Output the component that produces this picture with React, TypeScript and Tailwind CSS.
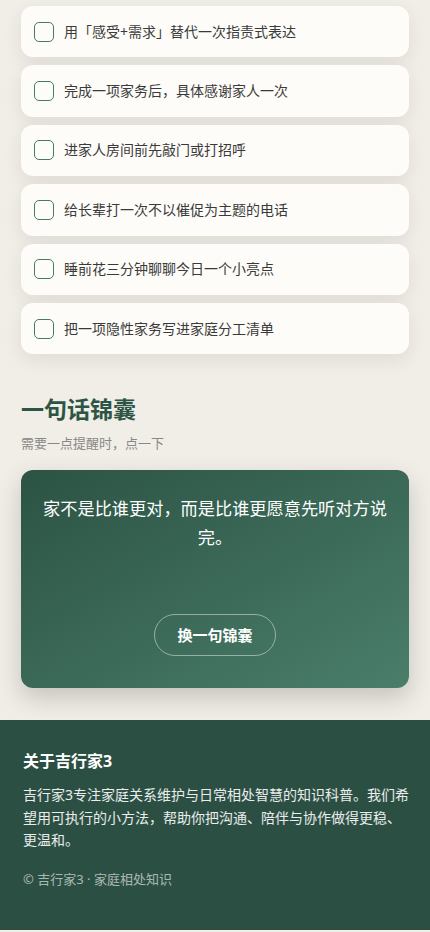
import { useState } from "react";

const TASKS = [
  "用「感受+需求」替代一次指责式表达",
  "完成一项家务后，具体感谢家人一次",
  "进家人房间前先敲门或打招呼",
  "给长辈打一次不以催促为主题的电话",
  "睡前花三分钟聊聊今日一个小亮点",
  "把一项隐性家务写进家庭分工清单",
];

const TIPS = [
  "家不是比谁更对，而是比谁更愿意先听对方说完。",
  "先说“我感到”，再说“我希望”，争吵会少一半。",
  "一句具体的谢谢，比十句笼统的夸奖更暖心。",
];

export default function App() {
  const [done, setDone] = useState<boolean[]>(TASKS.map(() => false));
  const [tip, setTip] = useState(0);

  return (
    <div
      className="min-h-screen bg-[#f1ede7] text-[#333]"
      style={{ fontFamily: '"Noto Sans", "Noto Sans CJK SC", sans-serif' }}
    >
      {/* Checklist */}
      <ul className="flex flex-col gap-2 px-[21px] pt-[6px]">
        {TASKS.map((task, i) => (
          <li key={task}>
            <button
              type="button"
              className="flex h-[51.4px] w-full items-center gap-[10px] rounded-xl bg-[#fdfcf8] px-[13px] text-left shadow-[0_6px_18px_rgba(60,60,40,0.09)]"
              onClick={() => setDone((d) => d.map((v, j) => (j === i ? !v : v)))}
            >
              <span
                className={`flex h-[20px] w-[20px] shrink-0 items-center justify-center rounded-[5px] border-[1.5px] border-[#457a66] ${
                  done[i] ? "bg-[#457a66]" : "bg-transparent"
                }`}
              >
                {done[i] ? (
                  <svg viewBox="0 0 24 24" className="h-3.5 w-3.5" fill="none" stroke="white" strokeWidth="3" strokeLinecap="round" strokeLinejoin="round">
                    <path d="M5 12l5 5L19 7" />
                  </svg>
                ) : null}
              </span>
              <span className="text-[14px] leading-[22px] text-[#3a3a3a]">{task}</span>
            </button>
          </li>
        ))}
      </ul>

      {/* Tip of the day */}
      <section className="px-[21px] pt-[40px]">
        <h2 className="text-[23px] font-bold leading-[30px] text-[#2c5545]">一句话锦囊</h2>
        <p className="mt-[9px] text-[13px] leading-[20px] text-[#888]">需要一点提醒时，点一下</p>
        <div className="mt-[17px] flex flex-col items-center rounded-xl bg-gradient-to-br from-[#2c5344] to-[#4a7e6b] px-[22px] pb-8 pt-6 shadow-[0_10px_24px_rgba(40,50,40,0.22)]">
          <p className="min-h-[58px] text-center text-[17.2px] leading-[29px] text-white">{TIPS[tip]}</p>
          <button
            type="button"
            className="mt-[62px] h-[42px] w-[122px] rounded-full border border-white/45 text-[15px] font-bold text-white"
            onClick={() => setTip((t) => (t + 1) % TIPS.length)}
          >
            换一句锦囊
          </button>
        </div>
      </section>

      {/* Footer */}
      <footer className="mt-8 bg-[#2c4f44] pb-[40px] pl-[23px] pr-[16px] pt-[29px] text-white">
        <h3 className="text-[16px] font-bold leading-[24px]">关于吉行家3</h3>
        <p className="mt-[11px] text-[14px] leading-[22.5px] text-white/90">
          吉行家3专注家庭关系维护与日常相处智慧的知识科普。我们希望用可执行的小方法，帮助你把沟通、陪伴与协作做得更稳、更温和。
        </p>
        <p className="mt-[16px] text-[13px] leading-[22px] text-white/60">© 吉行家3 · 家庭相处知识</p>
      </footer>
    </div>
  );
}
